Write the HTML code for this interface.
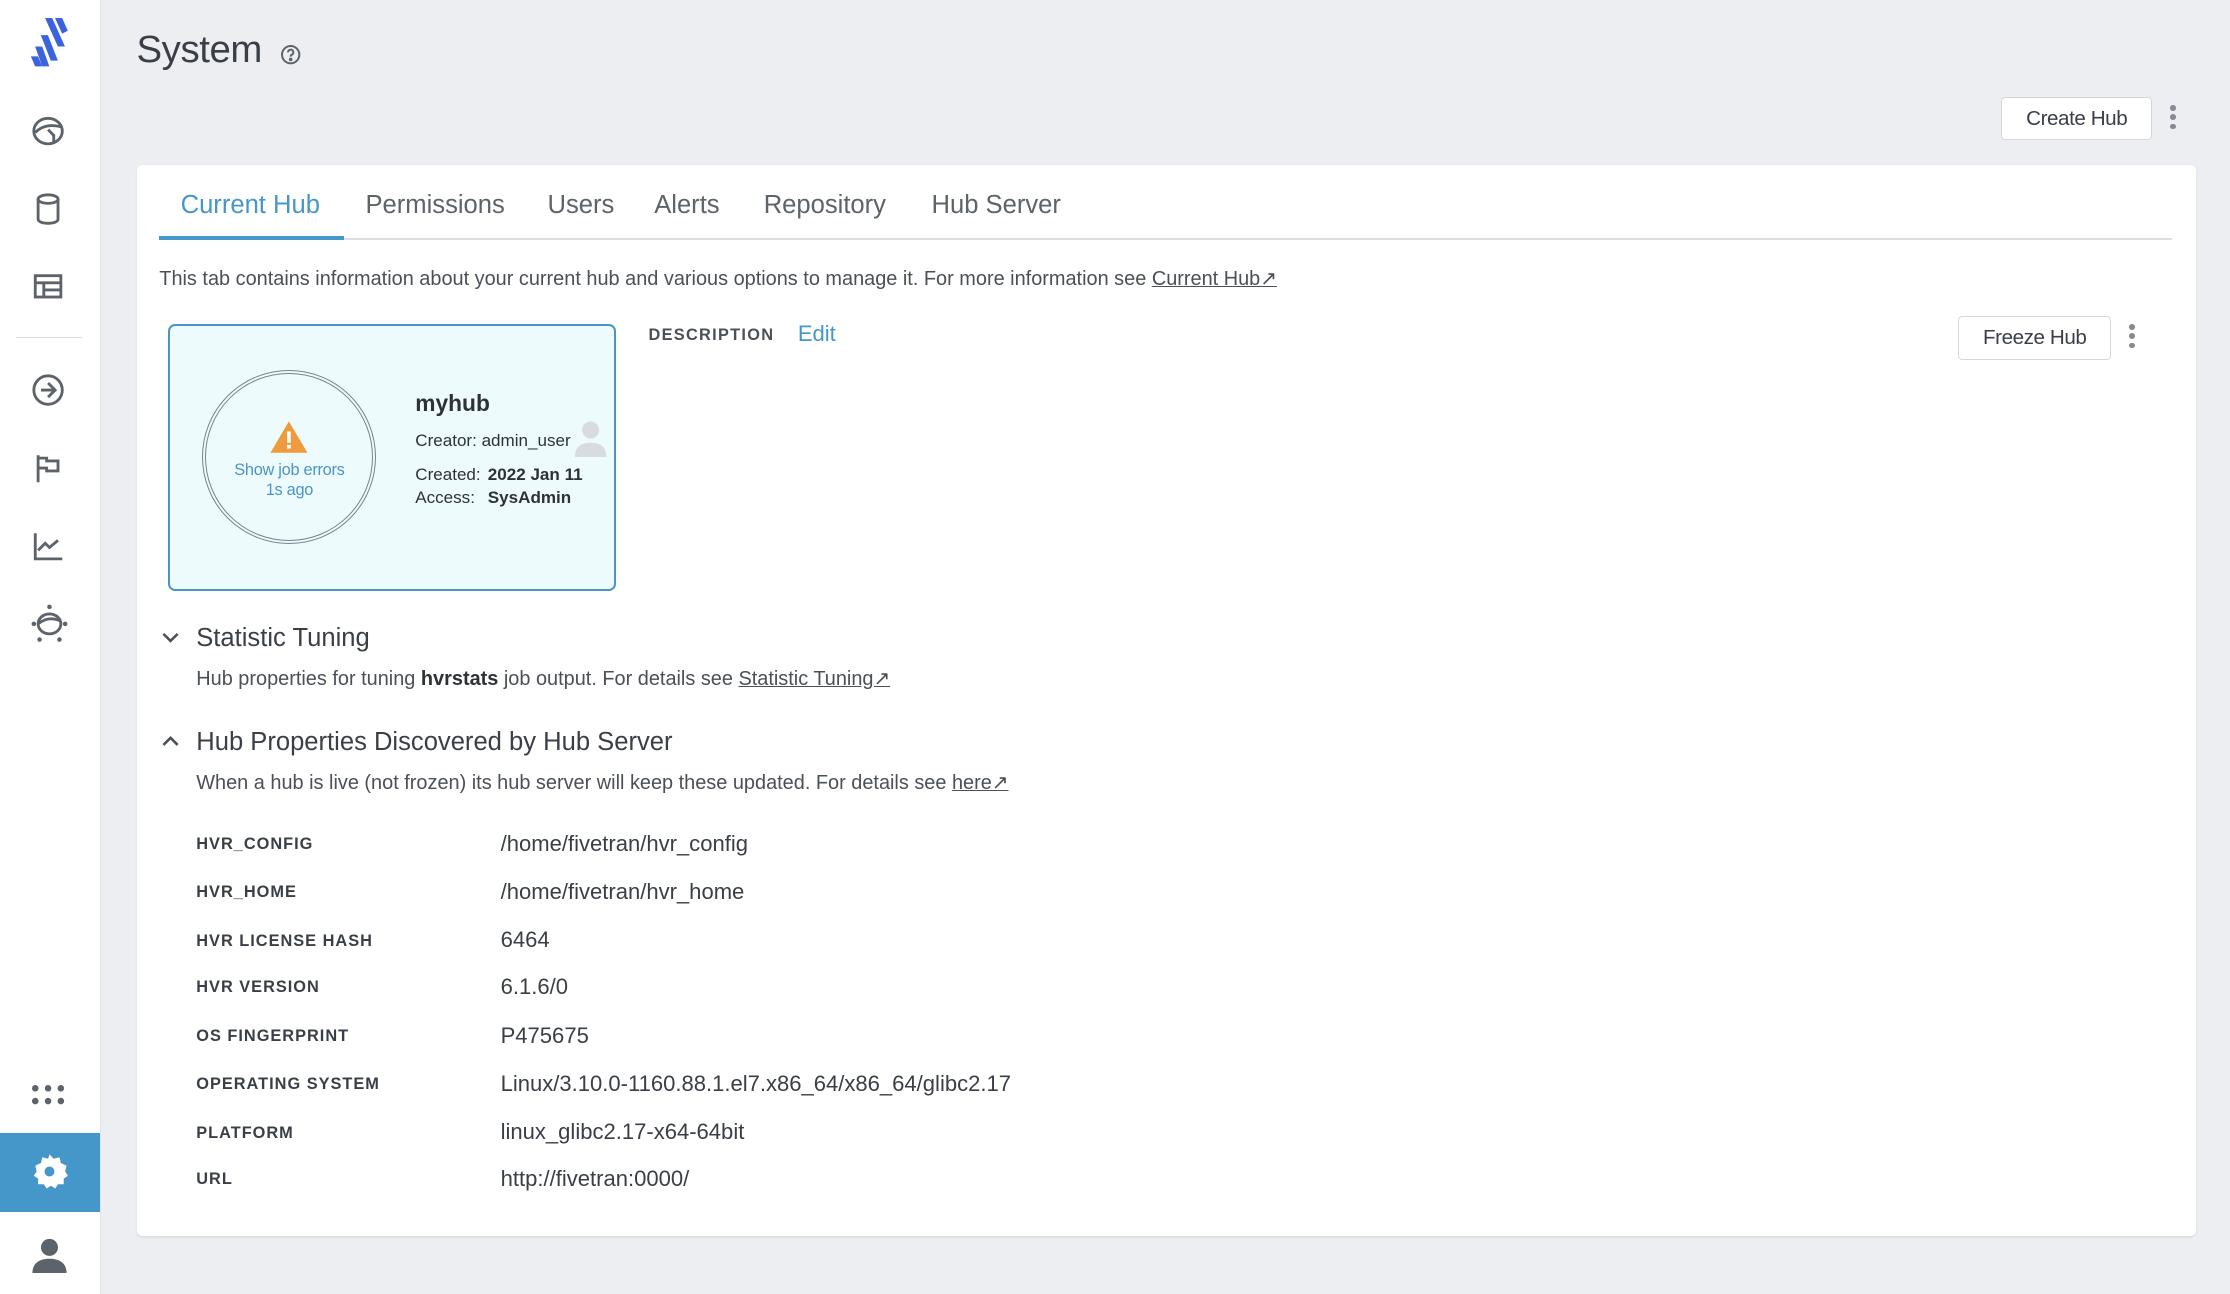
<!DOCTYPE html>
<html><head><meta charset="utf-8"><style>
html,body{margin:0;padding:0}
body{width:2230px;height:1294px;overflow:hidden;background:#edeef2;font-family:"Liberation Sans",sans-serif;color:#3a3f47}
#w{zoom:1.42219;width:1568px;height:910px;position:relative}
.a{position:absolute;white-space:nowrap}
#side{position:absolute;left:0;top:0;width:70px;height:910px;background:#fff;border-right:1px solid #e2e4e9}
.ic{position:absolute;left:22px}
.t{font-size:18px;letter-spacing:0;color:#5d636b}
.s{font-size:14px;letter-spacing:0;color:#4b5058}
.k{font-size:11.5px;font-weight:bold;letter-spacing:.7px;color:#3a3f47;left:138px}
.v{font-size:15.5px;letter-spacing:0;color:#3a3f47;left:352px}
a{color:#4b5058;text-decoration:underline}
.btn{position:absolute;background:#fff;border:1px solid #d4d7dc;border-radius:3px;font-size:14.5px;letter-spacing:-.3px;color:#3a3f47;text-align:center}
.dots{position:absolute;width:4px}
.dots i{display:block;width:4px;height:4px;border-radius:2px;background:#858a96;margin-bottom:2.5px}
.c{font-size:12px;color:#2e3238}
</style></head><body><div id="w">
<div id="side">
 <svg class="ic" style="left:20px;top:13px" width="28" height="36" viewBox="0 0 28 36"><g fill="#3b63dc"><polygon points="12,0 17,0 26,20 21,20"/><polygon points="19,0 24,0 28,9 24,11"/><polygon points="9,12 14,12 21,30 16,30"/><polygon points="5,20 10,20 15,34 10,34"/><polygon points="2,27 7,27 10,34 5,34"/></g></svg>
 <svg class="ic" style="top:80px" width="24" height="24" viewBox="0 0 24 24" fill="none" stroke="#5d636b" stroke-width="2"><ellipse cx="12" cy="12" rx="10" ry="9"/><path d="M3 13 Q10 6 21 9 M12 11 l4 4 v5"/></svg>
 <svg class="ic" style="top:135px" width="24" height="24" viewBox="0 0 24 24" fill="none" stroke="#5d636b" stroke-width="2"><ellipse cx="12" cy="5" rx="7" ry="3"/><path d="M5 5v14c0 2 3 3 7 3s7-1 7-3V5"/></svg>
 <svg class="ic" style="top:190px" width="24" height="24" viewBox="0 0 24 24" fill="none" stroke="#5d636b" stroke-width="2"><rect x="3" y="4" width="18" height="15"/><path d="M3 9h18M9 9v10M9 14h12"/></svg>
 <div class="a" style="left:11px;top:237px;width:47px;height:1px;background:#d9dbe0"></div>
 <svg class="ic" style="top:262px" width="24" height="24" viewBox="0 0 24 24" fill="none" stroke="#5d636b" stroke-width="2"><circle cx="12" cy="12" r="10"/><path d="M7 12h10M12 7l5 5-5 5"/></svg>
 <svg class="ic" style="top:317px" width="24" height="24" viewBox="0 0 24 24" fill="none" stroke="#5d636b" stroke-width="2"><path d="M5 3v19M5 5h6v2h8v7h-8v-2H5"/></svg>
 <svg class="ic" style="top:372px" width="24" height="24" viewBox="0 0 24 24" fill="none" stroke="#5d636b" stroke-width="2"><path d="M3 3v18h19M5 15l5-5 3 3 6-5"/></svg>
 <svg class="ic" style="top:425px" width="26" height="28" viewBox="0 0 26 28" fill="none" stroke="#5d636b" stroke-width="2"><ellipse cx="13" cy="14" rx="8" ry="7"/><path d="M5 14 Q12 8 21 12"/><g fill="#5d636b" stroke="none"><circle cx="13" cy="2" r="1.6"/><circle cx="2" cy="14" r="1.6"/><circle cx="24" cy="14" r="1.6"/><circle cx="6" cy="25" r="1.6"/><circle cx="20" cy="25" r="1.6"/></g></svg>
 <svg class="ic" style="top:762px" width="24" height="16" viewBox="0 0 24 16" fill="#5d636b"><circle cx="3" cy="3" r="2.3"/><circle cx="12" cy="3" r="2.3"/><circle cx="21" cy="3" r="2.3"/><circle cx="3" cy="12" r="2.3"/><circle cx="12" cy="12" r="2.3"/><circle cx="21" cy="12" r="2.3"/></svg>
 <div class="a" style="left:0;top:797px;width:70px;height:55px;background:#4597c9"></div>
 <svg class="ic" style="top:811px" width="26" height="26" viewBox="0 0 26 26"><path fill="#fff" d="M13 1l3 3 4-1 1 4 4 2-1 4 2 3-3 2 0 4-4 0-2 3-3-2-3 2-2-3-4 0 0-4-3-2 2-3-1-4 4-2 1-4 4 1z"/><circle cx="13" cy="13" r="3.5" fill="#4597c9"/></svg>
 <svg class="ic" style="left:22px;top:869px" width="26" height="28" viewBox="0 0 26 28" fill="#5d636b"><circle cx="13" cy="8" r="6"/><path d="M1 26c0-7 5-10 12-10s12 3 12 10z"/></svg>
</div>
<div class="a" style="left:96px;top:20px;font-size:27px;letter-spacing:-.3px;color:#3a3f47">System</div>
<svg class="a" style="left:197px;top:31px" width="15" height="15" viewBox="0 0 16 16" fill="none" stroke="#5d636b" stroke-width="1.5"><circle cx="8" cy="8" r="6.5"/><path d="M6 6.3a2 2 0 1 1 2.5 1.9c-.4.2-.5.5-.5 1.3"/><circle cx="8" cy="11.6" r=".6" fill="#5d636b"/></svg>
<div class="btn" style="left:1407px;top:68px;width:105px;height:29px;line-height:29px">Create Hub</div>
<div class="dots" style="left:1526px;top:74px"><i></i><i></i><i></i></div>
<div class="a" style="left:96px;top:116px;width:1448px;height:753px;background:#fff;border-radius:4px;box-shadow:0 1px 2px rgba(0,0,0,.08)"></div>
<div class="a" style="left:112px;top:167px;width:1415px;height:2px;background:#dcdee3"></div>
<div class="a" style="left:112px;top:166px;width:130px;height:3px;background:#4597c9"></div>
<div class="a t" style="left:127px;top:134px;color:#4597c9">Current Hub</div>
<div class="a t" style="left:257px;top:134px">Permissions</div>
<div class="a t" style="left:385px;top:134px">Users</div>
<div class="a t" style="left:460px;top:134px">Alerts</div>
<div class="a t" style="left:537px;top:134px">Repository</div>
<div class="a t" style="left:655px;top:134px">Hub Server</div>
<div class="a s" style="left:112px;top:188px">This tab contains information about your current hub and various options to manage it. For more information see <a>Current Hub↗</a></div>
<div class="a" style="left:118px;top:228px;width:312px;height:185px;background:#eefbfd;border:2px solid #4a95c4;border-radius:5px"></div>
<div class="a" style="left:142px;top:260px;width:117px;height:117px;border:3px double #7a818c;border-radius:50%"></div>
<svg class="a" style="left:189px;top:295px" width="28" height="24" viewBox="0 0 28 24"><path d="M14 1L27 23H1z" fill="#ef9a3c"/><rect x="12.7" y="8" width="2.6" height="8" fill="#fff"/><rect x="12.7" y="17.5" width="2.6" height="2.6" fill="#fff"/></svg>
<div class="a" style="left:142px;top:324px;width:123px;text-align:center;font-size:11.5px;line-height:14px;letter-spacing:-.2px;color:#4a95c4">Show job errors<br>1s ago</div>
<div class="a" style="left:292px;top:274px;font-size:16px;font-weight:bold;color:#2e3238">myhub</div>
<div class="a c" style="left:292px;top:303px">Creator: admin_user</div>
<svg class="a" style="left:404px;top:295px" width="24" height="26" viewBox="0 0 24 26" fill="#d8dbe0"><circle cx="11" cy="7" r="6"/><path d="M0 26c0-7 4-10 11-10s11 3 11 10z"/></svg>
<div class="a c" style="left:292px;top:327px">Created:</div>
<div class="a c" style="left:343px;top:327px;font-weight:bold">2022 Jan 11</div>
<div class="a c" style="left:292px;top:343px">Access:</div>
<div class="a c" style="left:343px;top:343px;font-weight:bold">SysAdmin</div>
<div class="a" style="left:456px;top:229px;font-size:11.5px;font-weight:bold;letter-spacing:.9px;color:#4b5058">DESCRIPTION</div>
<div class="a" style="left:561px;top:226px;font-size:15.5px;color:#4597c9">Edit</div>
<div class="btn" style="left:1377px;top:222px;width:106px;height:30px;line-height:30px">Freeze Hub</div>
<div class="dots" style="left:1497px;top:228px"><i></i><i></i><i></i></div>
<svg class="a" style="left:114px;top:444px" width="12" height="9" viewBox="0 0 12 9" fill="none" stroke="#4b5058" stroke-width="1.8"><path d="M1 2l5 5 5-5"/></svg>
<div class="a" style="left:138px;top:439px;font-size:18px;color:#3a3f47">Statistic Tuning</div>
<div class="a s" style="left:138px;top:469px">Hub properties for tuning <b style="color:#2e3238">hvrstats</b> job output. For details see <a>Statistic Tuning↗</a></div>
<svg class="a" style="left:114px;top:517px" width="12" height="9" viewBox="0 0 12 9" fill="none" stroke="#4b5058" stroke-width="1.8"><path d="M1 7l5-5 5 5"/></svg>
<div class="a" style="left:138px;top:512px;font-size:18px;color:#3a3f47">Hub Properties Discovered by Hub Server</div>
<div class="a s" style="left:138px;top:542px">When a hub is live (not frozen) its hub server will keep these updated. For details see <a>here↗</a></div>
<div class="a k" style="top:587px">HVR_CONFIG</div><div class="a v" style="top:584px">/home/fivetran/hvr_config</div>
<div class="a k" style="top:621px">HVR_HOME</div><div class="a v" style="top:618px">/home/fivetran/hvr_home</div>
<div class="a k" style="top:655px">HVR LICENSE HASH</div><div class="a v" style="top:652px">6464</div>
<div class="a k" style="top:688px">HVR VERSION</div><div class="a v" style="top:685px">6.1.6/0</div>
<div class="a k" style="top:722px">OS FINGERPRINT</div><div class="a v" style="top:719px">P475675</div>
<div class="a k" style="top:756px">OPERATING SYSTEM</div><div class="a v" style="top:753px">Linux/3.10.0-1160.88.1.el7.x86_64/x86_64/glibc2.17</div>
<div class="a k" style="top:790px">PLATFORM</div><div class="a v" style="top:787px">linux_glibc2.17-x64-64bit</div>
<div class="a k" style="top:823px">URL</div><div class="a v" style="top:820px">http://fivetran:0000/</div>
</div></body></html>
